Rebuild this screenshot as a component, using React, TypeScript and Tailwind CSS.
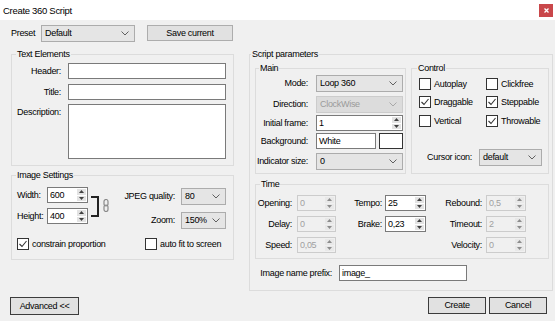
import React from "react";

const Chevron = ({ c = "#606060" }: { c?: string }) => (
  <svg width="8" height="5" viewBox="0 0 8 5">
    <path d="M0.5 0.5 L4 4 L7.5 0.5" fill="none" stroke={c} strokeWidth="1" />
  </svg>
);

function Combo({ text, cls, disabled }: { text: string; cls: string; disabled?: boolean }) {
  return (
    <div
      className={`flex items-center justify-between border pl-[3px] pr-[5px] ${
        disabled ? "border-[#cccccc] bg-[#dcdcdc] text-[#9a9a9a]" : "border-[#acacac] bg-[#e5e5e5]"
      } ${cls}`}
    >
      <span className="whitespace-nowrap">{text}</span>
      <Chevron c={disabled ? "#a8a8a8" : "#606060"} />
    </div>
  );
}

function Box({ cls, children }: { cls: string; children?: React.ReactNode }) {
  return (
    <div className={`flex items-center border border-[#7a7a7a] bg-white pl-[2px] ${cls}`}>{children}</div>
  );
}

function Spin({ value, cls, disabled }: { value: string; cls: string; disabled?: boolean }) {
  const ac = disabled ? "#8c8c8c" : "#404040";
  return (
    <div
      className={`flex border ${
        disabled ? "border-[#cccccc] text-[#a0a0a0]" : "border-[#7a7a7a] bg-white"
      } ${cls}`}
    >
      <div className="flex flex-1 items-center pl-[2px] whitespace-nowrap">{value}</div>
      <div className="my-[1px] mr-[1px] flex w-[9px] flex-col gap-[1px]">
        <div className={`flex flex-1 items-center justify-center ${disabled ? "bg-[#e8e8e8]" : "bg-[#e3e3e3]"}`}>
          <svg width="5" height="3" viewBox="0 0 5 3">
            <path d="M2.5 0 L5 3 L0 3Z" fill={ac} />
          </svg>
        </div>
        <div className={`flex flex-1 items-center justify-center ${disabled ? "bg-[#e8e8e8]" : "bg-[#e3e3e3]"}`}>
          <svg width="5" height="3" viewBox="0 0 5 3">
            <path d="M0 0 L5 0 L2.5 3Z" fill={ac} />
          </svg>
        </div>
      </div>
    </div>
  );
}

function Check({ checked }: { checked?: boolean }) {
  return (
    <div className="flex h-[12px] w-[12px] shrink-0 items-center justify-center border border-[#333333] bg-white">
      {checked && (
        <svg width="10" height="10" viewBox="0 0 10 10">
          <path d="M1.5 5 L4 7.5 L8.5 2" fill="none" stroke="#333333" strokeWidth="1.1" />
        </svg>
      )}
    </div>
  );
}

function CheckLabel({ label, checked, cls }: { label: string; checked?: boolean; cls?: string }) {
  return (
    <div className={`flex h-[12px] items-center ${cls ?? ""}`}>
      <Check checked={checked} />
      <span className="ml-[3px] whitespace-nowrap">{label}</span>
    </div>
  );
}

function Group({
  title,
  cls,
  lg,
  children,
}: {
  title: string;
  cls: string;
  lg: string;
  children?: React.ReactNode;
}) {
  return (
    <fieldset className={`border border-[#dcdcdc] ${cls}`}>
      <legend className={`px-[1px] leading-[11px] ${lg}`}>{title}</legend>
      {children}
    </fieldset>
  );
}

function Btn({ text, cls }: { text: string; cls: string }) {
  return <div className={`flex items-center justify-center border ${cls}`}>{text}</div>;
}

export default function App() {
  return (
    <div className="flex h-[321px] w-[555px] flex-col overflow-hidden bg-[#f0f0f0] font-['Liberation_Sans',Arial,sans-serif] text-[9px] leading-[11px] tracking-[-0.3px] text-black">
      {/* Title bar */}
      <div className="flex h-[20px] shrink-0 items-center justify-between bg-white pl-[3px]">
        <span className="text-[9.5px]">Create 360 Script</span>
        <div className="mr-[2px] flex h-[13px] w-[14px] items-center justify-center bg-[#c9474a]">
          <svg width="5" height="5" viewBox="0 0 5 5">
            <path d="M0.5 0.5 L4.5 4.5 M4.5 0.5 L0.5 4.5" stroke="white" strokeWidth="1.3" />
          </svg>
        </div>
      </div>

      {/* Preset row */}
      <div className="mt-[5px] flex h-[17px] shrink-0 items-start">
        <span className="ml-[11px] flex h-[17px] w-[30px] items-center">Preset</span>
        <Combo text="Default" cls="h-[17px] w-[94px]" />
        <Btn text="Save current" cls="ml-[12px] h-[16px] w-[86px] border-[#adadad] bg-[#e1e1e1]" />
      </div>

      {/* Main area */}
      <div className="mt-[7px] flex shrink-0 items-start">
        {/* Left column */}
        <div className="ml-[11px] flex w-[223px] flex-col">
          <Group title="Text Elements" cls="h-[117px]" lg="ml-[4px]">
            <div className="flex flex-col pt-[3px]">
              <div className="flex h-[16px] items-center">
                <span className="w-[49px] text-right">Header:</span>
                <Box cls="ml-[7px] h-[16px] w-[158px]" />
              </div>
              <div className="mt-[5px] flex h-[16px] items-center">
                <span className="w-[49px] text-right">Title:</span>
                <Box cls="ml-[7px] h-[16px] w-[158px]" />
              </div>
              <div className="mt-[4px] flex items-start">
                <span className="w-[49px] pt-[3px] text-right">Description:</span>
                <Box cls="ml-[7px] h-[55px] w-[158px]" />
              </div>
            </div>
          </Group>

          <Group title="Image Settings" cls="mt-[4px] h-[90px]" lg="ml-[4px]">
            <div className="flex items-start pt-[6px]">
              <div className="flex flex-col">
                <div className="flex h-[16px] items-center">
                  <span className="ml-[5px] w-[30px]">Width:</span>
                  <Spin value="600" cls="h-[16px] w-[41px]" />
                </div>
                <div className="mt-[5px] flex h-[16px] items-center">
                  <span className="ml-[5px] w-[30px]">Height:</span>
                  <Spin value="400" cls="h-[16px] w-[41px]" />
                </div>
              </div>
              <div className="ml-[3px] mt-[9px] h-[21px] w-[8px] border-b-2 border-r-2 border-t-2 border-[#222222]" />
              <div className="ml-[4px] mt-[12px]">
                <svg width="6" height="13" viewBox="0 0 6 13">
                  <rect x="1" y="0.5" width="4" height="6.5" rx="2" fill="none" stroke="#8a8a8a" strokeWidth="1.2" />
                  <rect x="1" y="6" width="4" height="6.5" rx="2" fill="none" stroke="#8a8a8a" strokeWidth="1.2" />
                </svg>
              </div>
              <div className="ml-auto mr-[7px] mt-[1px] flex flex-col items-end">
                <div className="flex h-[17px] items-center">
                  <span className="whitespace-nowrap">JPEG quality:</span>
                  <Combo text="80" cls="ml-[6px] h-[17px] w-[45px]" />
                </div>
                <div className="mt-[7px] flex h-[17px] items-center">
                  <span>Zoom:</span>
                  <Combo text="150%" cls="ml-[6px] h-[17px] w-[45px]" />
                </div>
              </div>
            </div>
            <div className="mt-[9px] flex items-center">
              <div className="ml-[5px] w-[128px]">
                <CheckLabel label="constrain proportion" checked />
              </div>
              <CheckLabel label="auto fit to screen" />
            </div>
          </Group>
        </div>

        {/* Right column */}
        <Group title="Script parameters" cls="ml-[15px] h-[242px] w-[304px]" lg="ml-[1px]">
          <div className="ml-[5px] mt-[3px] flex gap-[5px]">
            <Group title="Main" cls="h-[111px] w-[151px]" lg="ml-[3px]">
              <div className="flex flex-col">
                <div className="mt-[1px] flex h-[17px] items-center">
                  <span className="flex w-[52px] justify-end whitespace-nowrap">Mode:</span>
                  <Combo text="Loop 360" cls="ml-[8px] h-[17px] w-[87px]" />
                </div>
                <div className="mt-[4px] flex h-[17px] items-center">
                  <span className="flex w-[52px] justify-end whitespace-nowrap">Direction:</span>
                  <Combo text="ClockWise" cls="ml-[8px] h-[17px] w-[87px]" disabled />
                </div>
                <div className="mt-[2px] flex h-[16px] items-center">
                  <span className="flex w-[52px] justify-end whitespace-nowrap">Initial frame:</span>
                  <Spin value="1" cls="ml-[8px] h-[16px] w-[87px]" />
                </div>
                <div className="mt-[2px] flex h-[16px] items-center">
                  <span className="flex w-[52px] justify-end whitespace-nowrap">Background:</span>
                  <Box cls="ml-[8px] h-[16px] w-[60px]">White</Box>
                  <div className="ml-[3px] h-[16px] w-[24px] border border-[#333333] bg-white" />
                </div>
                <div className="mt-[4px] flex h-[17px] items-center">
                  <span className="flex w-[52px] justify-end whitespace-nowrap">Indicator size:</span>
                  <Combo text="0" cls="ml-[8px] h-[17px] w-[87px]" />
                </div>
              </div>
            </Group>

            <Group title="Control" cls="h-[111px] w-[138px]" lg="ml-[5px]">
              <div className="flex flex-col">
                <div className="mt-[4px] flex">
                  <CheckLabel label="Autoplay" cls="ml-[7px] w-[67px]" />
                  <CheckLabel label="Clickfree" />
                </div>
                <div className="mt-[6px] flex">
                  <CheckLabel label="Draggable" checked cls="ml-[7px] w-[67px]" />
                  <CheckLabel label="Steppable" checked />
                </div>
                <div className="mt-[7px] flex">
                  <CheckLabel label="Vertical" cls="ml-[7px] w-[67px]" />
                  <CheckLabel label="Throwable" checked />
                </div>
                <div className="mr-[6px] mt-[22px] flex h-[17px] items-center justify-end">
                  <span className="whitespace-nowrap">Cursor icon:</span>
                  <Combo text="default" cls="ml-[7px] h-[17px] w-[63px]" />
                </div>
              </div>
            </Group>
          </div>

          <Group title="Time" cls="ml-[5px] mt-[5px] h-[80px] w-[294px]" lg="ml-[4px]">
            <div className="flex pt-[5px]">
              <div className="flex flex-col gap-[5px]">
                {[
                  ["Opening:", "0"],
                  ["Delay:", "0"],
                  ["Speed:", "0,05"],
                ].map(([l, v]) => (
                  <div key={l} className="flex h-[16px] items-center">
                    <span className="flex w-[36px] justify-end whitespace-nowrap">{l}</span>
                    <Spin value={v} cls="ml-[5px] h-[16px] w-[39px]" disabled />
                  </div>
                ))}
              </div>
              <div className="flex flex-col gap-[5px]">
                {[
                  ["Tempo:", "25"],
                  ["Brake:", "0,23"],
                ].map(([l, v]) => (
                  <div key={l} className="flex h-[16px] items-center">
                    <span className="flex w-[46px] justify-end whitespace-nowrap">{l}</span>
                    <Spin value={v} cls="ml-[3px] h-[16px] w-[41px]" />
                  </div>
                ))}
              </div>
              <div className="flex flex-col gap-[5px]">
                {[
                  ["Rebound:", "0,5"],
                  ["Timeout:", "2"],
                  ["Velocity:", "0"],
                ].map(([l, v]) => (
                  <div key={l} className="flex h-[16px] items-center">
                    <span className="flex w-[56px] justify-end whitespace-nowrap">{l}</span>
                    <Spin value={v} cls="ml-[4px] h-[16px] w-[40px]" disabled />
                  </div>
                ))}
              </div>
            </div>
          </Group>

          <div className="mt-[6px] flex h-[16px] items-center">
            <span className="flex w-[82px] justify-end whitespace-nowrap">Image name prefix:</span>
            <Box cls="ml-[7px] h-[16px] w-[128px]">image_</Box>
          </div>
        </Group>
      </div>

      {/* Bottom buttons */}
      <div className="mt-[6px] flex shrink-0 items-start">
        <Btn text="Advanced <<" cls="ml-[10px] h-[18px] w-[69px] border-[#3c3c3c] bg-[#e1e1e1]" />
        <Btn text="Create" cls="ml-auto h-[17px] w-[58px] border-[#3c3c3c] bg-[#e1e1e1]" />
        <Btn text="Cancel" cls="ml-[3px] mr-[8px] h-[17px] w-[58px] border-[#3c3c3c] bg-[#e1e1e1]" />
      </div>
    </div>
  );
}
